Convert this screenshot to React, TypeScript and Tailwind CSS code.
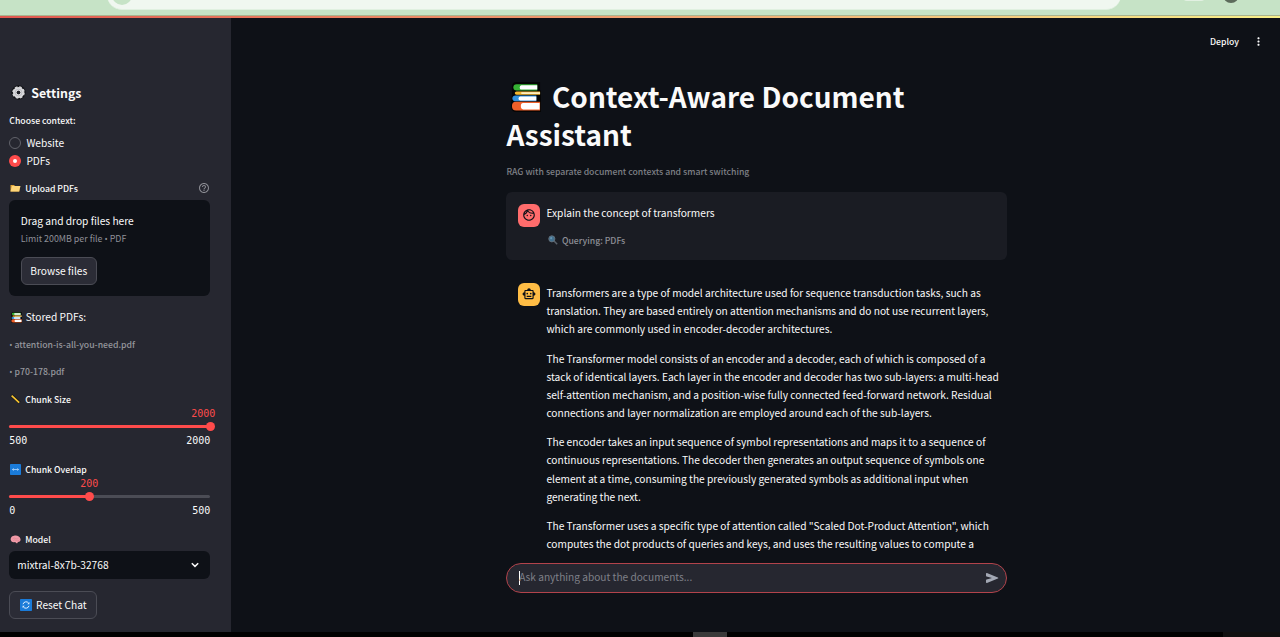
import React from "react";
import { MdOutlineFace, MdOutlineSmartToy, MdHelpOutline, MdMoreVert } from "react-icons/md";

const Gear = () => (
  <svg viewBox="0 0 24 24" className="size-[15px] shrink-0">
    <circle cx="12" cy="12" r="11.5" fill="#111216" />
    <circle cx="12" cy="12" r="8.8" fill="none" stroke="#cfcfd2" strokeWidth="2.6" strokeDasharray="4.2 2.71" />
    <circle cx="12" cy="12" r="5.8" fill="none" stroke="#d9d9dc" strokeWidth="6" />
    <circle cx="12" cy="12" r="2.8" fill="#222329" />
    <circle cx="12" cy="12" r="5.4" fill="none" stroke="#aeaeb3" strokeWidth="1" />
  </svg>
);

const Books = ({ className }: { className: string }) => (
  <svg viewBox="0 0 32 32" className={className}>
    <path d="M1 5Q1 0 6 0H31V9H32V32H4Q0 31 0 25L1 14Z" fill="#050505" />
    <path d="M6 2.5H28V9H6Q2.5 9 2.5 5.8T6 2.5Z" fill="#35b234" />
    <path d="M11 3.5H28V8H11Q9.3 8 9.3 6T11 3.5Z" fill="#fff" />
    <path d="M6 10H31V13.5H6Q4 13.5 4 11.8T6 10Z" fill="#f5b82e" />
    <path d="M11 11H31V12.7H11Z" fill="#fff3d0" />
    <path d="M5 14.5H27V20.5H5Q1.5 20.5 1.5 17.5T5 14.5Z" fill="#3090dc" />
    <path d="M10 15.5H27V19.6H10Q8 19.6 8 17.6T10 15.5Z" fill="#fff" />
    <path d="M5.5 21H31V30.5H5.5Q1 30.5 1 25.7T5.5 21Z" fill="#f0602a" />
    <path d="M13 22.3H30.5V29.2H13Q10.5 29.2 10.5 25.7T13 22.3Z" fill="#fff" />
  </svg>
);

const Folder = () => (
  <svg viewBox="0 0 22 16" className="h-[8px] w-[11px] shrink-0">
    <path d="M1 15V2H8L10 4H19V15Z" fill="#e0a53a" />
    <path d="M1 15L4 4H21L18 15Z" fill="#ffd679" />
  </svg>
);

const Ruler = () => (
  <svg viewBox="0 0 12 12" className="size-[11px] shrink-0">
    <path d="M1.5 1.5L10.5 9.5" stroke="#17171b" strokeWidth="3.4" />
    <path d="M1.8 1.8L10 9.4" stroke="#f7c531" strokeWidth="1.8" />
  </svg>
);

const ArrowsBox = () => (
  <svg viewBox="0 0 12 12" className="size-[11px] shrink-0">
    <rect width="12" height="12" rx="0.8" fill="#1a7bd9" />
    <path d="M3 6H9M4 4.8L2.6 6L4 7.2M8 4.8L9.4 6L8 7.2" fill="none" stroke="#c9e4ff" strokeWidth="0.8" />
  </svg>
);

const Brain = () => (
  <svg viewBox="0 0 22 18" className="h-[9px] w-[11px] shrink-0">
    <path d="M2 11C0 7 3 2 8 1.5C14 0 20 3 21 8C22 12 19 14 16 14L14 17L10 14C6 15 3 14 2 11Z" fill="#f29ba8" />
    <path d="M5 8Q8 4 11 7T17 6M6 12Q9 8 13 11T19 9" fill="none" stroke="#d67c8a" strokeWidth="1" />
  </svg>
);

const RefreshBox = () => (
  <svg viewBox="0 0 12 12" className="size-[12px] shrink-0">
    <rect width="12" height="12" rx="0.8" fill="#1a7bd9" />
    <path d="M3 5.2A3.2 3.2 0 0 1 8.6 4M9 6.8A3.2 3.2 0 0 1 3.4 8" fill="none" stroke="#e2f1ff" strokeWidth="1" />
    <path d="M9.4 3V5.2H7.2ZM2.6 9V6.8H4.8Z" fill="#e2f1ff" />
  </svg>
);

const Magnifier = () => (
  <svg viewBox="0 0 12 12" className="size-[10px] shrink-0">
    <path d="M7 7L11 11" stroke="#59616a" strokeWidth="1.8" />
    <circle cx="4.6" cy="4.6" r="3.7" fill="#42708f" stroke="#69727b" strokeWidth="1" />
    <circle cx="3.8" cy="3.8" r="1.3" fill="#6594b2" />
  </svg>
);

// The CJK face draws a full-width bullet, so it takes its glyph from a Latin family.
const Bullet = () => <span className="font-['Open_Sans',sans-serif] text-[8.5px]">•</span>;

const LABEL = "flex h-[18px] items-center text-[8.7px] font-medium leading-none whitespace-nowrap";

type SliderProps = { fill: string; value: string; valuePad: string; min: string; max: string };

function Slider({ fill, value, valuePad, min, max }: SliderProps) {
  return (
    <div className="font-['DejaVu_Sans_Mono',monospace] text-[10px] leading-none">
      <div className={`flex h-[10px] items-center pt-[2px] text-[#ff4b4b] ${valuePad}`}>
        <span>{value}</span>
      </div>
      <div className="flex h-4 items-center">
        <div className="relative h-[3px] w-full rounded-full bg-[#4b4c55]">
          <div className="h-full rounded-full bg-[#ff4b4b]" style={{ width: fill }} />
          <div className="absolute -top-[3px] -ml-[4.5px] size-[9px] rounded-full bg-[#ff4b4b]" style={{ left: fill }} />
        </div>
      </div>
      <div className="flex h-3 items-center justify-between pt-[2px]">
        <span>{min}</span>
        <span>{max}</span>
      </div>
    </div>
  );
}

function Sidebar() {
  return (
    <aside className="w-[231px] shrink-0 bg-[#262730] pt-[63px] pr-[20.7px] pl-[9.3px]">
      <h2 className="flex h-[22px] items-center gap-[5px] pt-px pl-[2px] text-[12.4px] leading-none font-bold">
        <Gear />
        <span className="pt-[2px]">Settings</span>
      </h2>
      <div className={`mt-2 pt-[2px] ${LABEL}`}>Choose context:</div>
      <div className="mt-[5px] flex h-[18px] items-center gap-[5.6px] text-[10.2px] leading-none">
        <span className="size-[11.5px] rounded-full border border-[#62636b]" />
        <span>Website</span>
      </div>
      <div className="flex h-[18px] items-center gap-[5.6px] text-[10.2px] leading-none">
        <span className="flex size-[11.5px] items-center justify-center rounded-full bg-[#ff4b4b]">
          <span className="size-[4.5px] rounded-full bg-white" />
        </span>
        <span>PDFs</span>
      </div>
      <div className={`mt-[9px] justify-between ${LABEL}`}>
        <span className="flex items-center gap-1 pl-px">
          <Folder />
          <span className="pt-[2px]">Upload PDFs</span>
        </span>
        <MdHelpOutline className="size-[12px] text-[#8b8c93]" />
      </div>
      <section className="mt-[3px] flex h-24 flex-col items-start rounded-[6px] bg-[#0e1117] px-[11.5px] pt-3 leading-none whitespace-nowrap">
        <div className="flex h-[18px] items-center text-[10.2px]">Drag and drop files here</div>
        <div className="flex h-[18px] items-center gap-[2px] pt-px text-[8.9px] text-[#8e9097]">
          <span>Limit 200MB per file</span>
          <Bullet />
          <span>PDF</span>
        </div>
        <button className="mt-[9px] flex h-7 w-[76px] items-center justify-center rounded-[6px] border border-[#4b4c55] bg-[#2b2c36] text-[10.2px]">
          Browse files
        </button>
      </section>
      <div className="mt-3 flex h-[18px] items-center gap-1 pl-[1.5px] text-[10.2px] leading-none">
        <Books className="size-[11px] shrink-0" />
        <span>Stored PDFs:</span>
      </div>
      <div className={`mt-[9px] gap-[2px] pt-[2px] text-[#95969c] ${LABEL}`}>
        <Bullet />
        <span>attention-is-all-you-need.pdf</span>
      </div>
      <div className={`mt-[9px] gap-[2px] pt-[2px] text-[#95969c] ${LABEL}`}>
        <Bullet />
        <span>p70-178.pdf</span>
      </div>
      <div className={`mt-[10px] gap-1 pl-px ${LABEL}`}>
        <Ruler />
        <span className="pt-[2px]">Chunk Size</span>
      </div>
      <Slider fill="100%" value="2000" valuePad="-mr-[5px] justify-end" min="500" max="2000" />
      <div className={`mt-[14px] gap-1 pl-px ${LABEL}`}>
        <ArrowsBox />
        <span className="pt-[2px]">Chunk Overlap</span>
      </div>
      <Slider fill="40%" value="200" valuePad="pl-[71px]" min="0" max="500" />
      <div className={`mt-[14px] gap-1 pl-px ${LABEL}`}>
        <Brain />
        <span className="pt-[2px]">Model</span>
      </div>
      <div className="mt-[3px] flex h-7 items-center justify-between rounded-[6px] bg-[#0e1117] pr-[11px] pl-[8px] text-[10.2px] leading-none">
        <span>mixtral-8x7b-32768</span>
        <svg viewBox="0 0 8 6" className="h-[6px] w-[8px]">
          <path d="M0.8 1.2L4 4.4L7.2 1.2" fill="none" stroke="#fafafa" strokeWidth="1.5" />
        </svg>
      </div>
      <button className="mt-3 flex h-7 w-[88px] items-center justify-center gap-1 rounded-[6px] border border-[#4b4c55] bg-[#2b2c36] text-[10.2px] leading-none whitespace-nowrap">
        <RefreshBox />
        <span>Reset Chat</span>
      </button>
    </aside>
  );
}

const ANSWER = [
  [
    "Transformers are a type of model architecture used for sequence transduction tasks, such as",
    "translation. They are based entirely on attention mechanisms and do not use recurrent layers,",
    "which are commonly used in encoder-decoder architectures.",
  ],
  [
    "The Transformer model consists of an encoder and a decoder, each of which is composed of a",
    "stack of identical layers. Each layer in the encoder and decoder has two sub-layers: a multi-head",
    "self-attention mechanism, and a position-wise fully connected feed-forward network. Residual",
    "connections and layer normalization are employed around each of the sub-layers.",
  ],
  [
    "The encoder takes an input sequence of symbol representations and maps it to a sequence of",
    "continuous representations. The decoder then generates an output sequence of symbols one",
    "element at a time, consuming the previously generated symbols as additional input when",
    "generating the next.",
  ],
  [
    "The Transformer uses a specific type of attention called \"Scaled Dot-Product Attention\", which",
    "computes the dot products of queries and keys, and uses the resulting values to compute a",
  ],
];

function Main() {
  return (
    <main className="min-w-0 flex-1 bg-[#0e1117]">
      <header className="flex h-[47px] items-center justify-end gap-[13px] pr-[15px] text-[8.7px] leading-none font-medium">
        <span className="pt-px">Deploy</span>
        <MdMoreVert className="size-[13px]" />
      </header>
      <div className="ml-[275.4px] w-[500.4px]">
        <h1 className="pt-[12px] text-[28px] leading-[38px] font-bold whitespace-nowrap">
          <span className="flex items-center pl-[4.6px]">
            <Books className="mt-[2px] mr-[11px] size-[30px] shrink-0" />
            Context-Aware Document
          </span>
          <span className="block">Assistant</span>
        </h1>
        <p className="mt-[10px] text-[8.7px] leading-[18px] font-medium text-[#7e8086]">
          RAG with separate document contexts and smart switching
        </p>
        <article className="mt-[11px] flex h-[68px] gap-[6px] rounded-[6px] bg-[#1a1c23] px-[11.5px] pt-3">
          <span className="flex size-[22.5px] items-center justify-center rounded-[6px] bg-[#ff6c6c] text-[#0e1117]">
            <MdOutlineFace className="size-[14px]" />
          </span>
          <div>
            <p className="text-[10.2px] leading-[18px]">Explain the concept of transformers</p>
            <p className="mt-[9px] flex h-[18px] items-center gap-1 pl-[1.5px] text-[8.7px] leading-none font-medium text-[#8d8f96]">
              <Magnifier />
              <span className="pt-[2px]">Querying: PDFs</span>
            </p>
          </div>
        </article>
        <article className="mt-[23px] flex h-[280px] gap-[6px] px-[11.5px]">
          <span className="flex size-[22.5px] shrink-0 items-center justify-center rounded-[6px] bg-[#ffbd45] text-[#0e1117]">
            <MdOutlineSmartToy className="size-[14px]" />
          </span>
          <div className="flex flex-col gap-[11.3px] pt-[0.9px] text-[10.19px] leading-[18.12px] whitespace-nowrap">
            {ANSWER.map((lines) => (
              <p key={lines[0]}>
                {lines.map((line) => (
                  <span key={line} className="block">{line}</span>
                ))}
              </p>
            ))}
          </div>
        </article>
        <div className="flex h-[30px] items-center justify-between rounded-full border border-[#b2434b] bg-[#262730] pr-[6px] pl-[11.8px] text-[10.15px] leading-none text-[#7f8088]">
          <span className="flex items-center">
            <span className="h-[14px] w-px bg-white" />
            <span className="-mt-px -ml-px">Ask anything about the documents...</span>
          </span>
          <svg viewBox="0 0 24 24" className="size-[16px]">
            <path
              fill="#a3a8b4"
              d="M3 5.5v3.2c0 .5.3.9.8 1L12 12l-8.2 2.3c-.5.1-.8.5-.8 1v3.2c0 .7.7 1.2 1.4.9l16.4-6.5c.8-.3.8-1.5 0-1.8L4.4 4.6C3.7 4.3 3 4.8 3 5.5z"
            />
          </svg>
        </div>
      </div>
    </main>
  );
}

export default function App() {
  return (
    <div className="flex h-[637px] w-[1280px] flex-col overflow-hidden bg-black font-['Noto_Sans_CJK_SC','Noto_Sans',sans-serif] text-[#fafafa]">
      <div className="flex h-[15px] shrink-0 items-start justify-between overflow-hidden bg-[#c6e3c6] pr-[41px] pl-[107px]">
        <div className="-mt-5 flex h-[30px] w-[1014px] items-start rounded-[15px] border-b border-[#e0f0e0] bg-[#f0f7f0] pl-[5px]">
          <div className="mt-[5px] size-5 rounded-full bg-[#c6e3c6]" />
        </div>
        <div className="-mt-[13px] flex items-end gap-[18px]">
          <div className="mb-[2px] h-[12px] w-[22px] rounded-b bg-[#e2f0e2]" />
          <div className="size-4 rounded-full bg-[#5c6b5b]" />
        </div>
      </div>
      <div className="h-[3px] shrink-0 border-t border-[#a9b58f] bg-linear-to-r from-[#e0574f] via-[#efa071] to-[#f7f08a]" />
      <div className="flex h-[614px] shrink-0">
        <Sidebar />
        <Main />
      </div>
      <div className="flex h-[5px] justify-between pl-[693px]">
        <div className="w-[34px] bg-[#3a3a3a]" />
        <div className="w-[57px] bg-[#101010]" />
      </div>
    </div>
  );
}
